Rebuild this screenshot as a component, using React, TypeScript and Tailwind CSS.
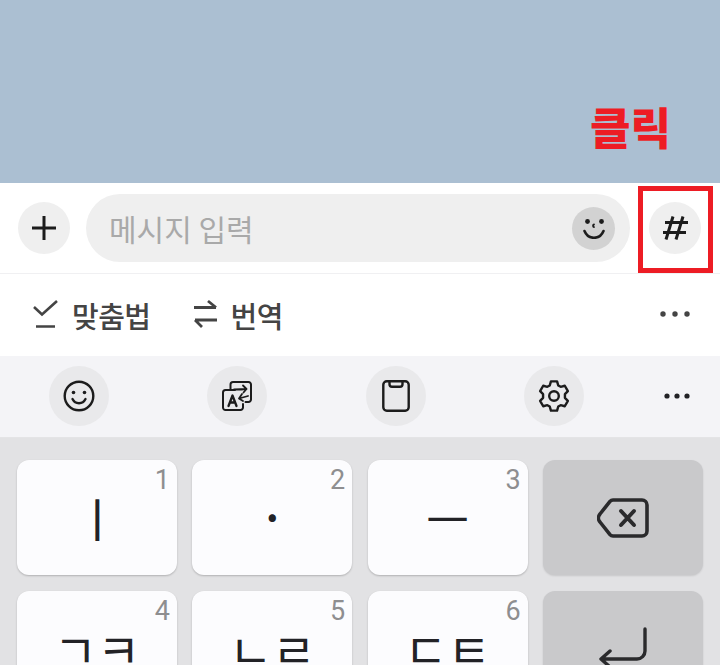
const font = { fontFamily: '"Noto Sans CJK KR", "Noto Sans", sans-serif' };

const CircleButton = ({ children }: { children: React.ReactNode }) => (
  <div className="flex h-[60px] w-[60px] items-center justify-center rounded-full bg-[#e9e9eb]">{children}</div>
);

const Key = ({ label, num, size, weight }: { label: string; num: string; size: string; weight?: string }) => (
  <div className="relative flex h-[115px] items-center justify-center rounded-[12px] bg-[#fcfcfe] pb-[3px] shadow-[0_1px_2px_rgba(0,0,0,0.22)]">
    <span className="absolute right-[7px] top-[2px] text-[27px] leading-[36px] text-[#8e8e90]" style={{ fontFamily: "Roboto, sans-serif" }}>
      {num}
    </span>
    <span className={`${size} ${weight ?? "font-normal"} leading-none text-[#222226]`}>{label}</span>
  </div>
);

const ActionKey = ({ children }: { children: React.ReactNode }) => (
  <div className="flex h-[115px] items-center justify-center rounded-[12px] bg-[#c9c9cb] shadow-[0_1px_2px_rgba(0,0,0,0.12)]">{children}</div>
);

export default function App() {
  return (
    <div className="relative h-[665px] w-[720px] overflow-hidden bg-white" style={font}>
      <div className="h-[183px] bg-[#abbfd2]" />

      {/* input row */}
      <div className="flex h-[91px] items-start border-b border-[#f0f0f2] bg-white pl-[18px] pr-[19px] pt-[11px]">
        <div className="mt-[8px] flex h-[52px] w-[52px] shrink-0 items-center justify-center rounded-full bg-[#efefef]">
          <svg width="26" height="26" viewBox="0 0 26 26" stroke="#1c1c1c" strokeWidth="3">
            <path d="M13 1v24M1 13h24" />
          </svg>
        </div>
        <div className="ml-[16px] flex h-[68px] w-[544px] shrink-0 items-center justify-between rounded-full bg-[#efefef] pl-[23px] pr-[15px]">
          <span className="text-[30px] leading-none text-[#a9a9a9]">메시지 입력</span>
          <div className="flex h-[43px] w-[43px] items-center justify-center rounded-full bg-[#d2d2d2]">
            <svg width="22" height="22" viewBox="0 0 22 22" fill="none" stroke="#1c1c1c" strokeWidth="2.600" strokeLinecap="round">
              <circle cx="4.500" cy="4.500" r="2.400" fill="#1c1c1c" stroke="none" />
              <circle cx="18.500" cy="4.500" r="2.400" fill="#1c1c1c" stroke="none" />
              <path d="M11 7.500c-1.300.3-1.300 2.300 0 2.600" strokeWidth="1.800" />
              <path d="M1.500 14c2 5 5.500 6.800 9.500 6.800s7.500-1.800 9.500-6.800" />
            </svg>
          </div>
        </div>
        <div className="ml-[19px] mt-[8px] flex h-[52px] w-[52px] shrink-0 items-center justify-center rounded-full bg-[#efefef]">
          <svg width="25" height="24" viewBox="0 0 25 24" fill="none" stroke="#1c1c1c" strokeWidth="3">
            <path d="M10 .5 3 23.500M20 .5l-7 23M2 6.500h23M0 16.500h23" />
          </svg>
        </div>
      </div>

      {/* suggestion row */}
      <div className="flex h-[82px] items-center bg-white pl-[33px] pr-[30px] text-[#444444]">
        <svg width="25" height="28" viewBox="0 0 25 28" fill="none" stroke="#444444" strokeWidth="2.600" className="-mt-[2px]">
          <path d="m1 7 8 7.500L24 1M3 26.500h19" />
        </svg>
        <span className="ml-[14px] text-[29px] font-medium leading-none tracking-[-0.5px]">맞춤법</span>
        <svg width="26" height="30" viewBox="0 0 26 30" fill="none" stroke="#444444" strokeWidth="2.800" className="ml-[41px] -mt-[2px]">
          <path d="M2 8.500h22M16 2l8 6.500M25 21H3M3 21l7 7" />
        </svg>
        <span className="ml-[13px] text-[29px] font-medium leading-none tracking-[-0.5px]">번역</span>
        <svg width="30" height="8" viewBox="0 0 30 8" fill="#444444" className="ml-auto -mt-[2px]">
          <circle cx="3" cy="4" r="2.700" />
          <circle cx="15" cy="4" r="2.700" />
          <circle cx="27" cy="4" r="2.700" />
        </svg>
      </div>

      {/* toolbar */}
      <div className="flex h-[82px] items-start border-b border-[#e4e4e6] bg-[#f4f4f7] pl-[49px] pr-[30px] pt-[10px]">
        <CircleButton>
          <svg width="32" height="32" viewBox="0 0 32 32" fill="none" stroke="#1c1c1c" strokeWidth="2.400" strokeLinecap="round">
            <circle cx="16" cy="16" r="14.300" />
            <circle cx="10.500" cy="12.500" r="1.800" fill="#1c1c1c" stroke="none" />
            <circle cx="21.500" cy="12.500" r="1.800" fill="#1c1c1c" stroke="none" />
            <path d="M9.500 19c1.500 3 4 4.200 6.500 4.200s5-1.200 6.500-4.200" />
          </svg>
        </CircleButton>
        <div className="ml-[98px]">
          <CircleButton>
            <svg width="30" height="30" viewBox="0 0 30 30" fill="none" stroke="#1c1c1c" strokeWidth="2" strokeLinecap="round" strokeLinejoin="round">
              <path d="M8.500 8.500V3.500a2.500 2.500 0 0 1 2.500-2.500h15.500a2.500 2.500 0 0 1 2.500 2.500v15a2.500 2.500 0 0 1-2.500 2.500h-3" />
              <path d="M13 9H3.500A2.500 2.500 0 0 0 1 11.500v15A2.500 2.500 0 0 0 3.500 29h15a2.500 2.500 0 0 0 2.500-2.500V23" />
              <path d="M12 8.500c4 0 8 0 12.500-.5M21 4.500l3.500 3.500-3 3.500M26 15l-9 2.500M20 13l-3 4.500 4 2.500" strokeWidth="1.800" />
              <path d="M6.500 25l4-10.500 4 10.500M8 21.500h5" strokeWidth="2.300" />
            </svg>
          </CircleButton>
        </div>
        <div className="ml-[99px]">
          <CircleButton>
            <svg width="28" height="32" viewBox="0 0 28 32" fill="none" stroke="#1c1c1c" strokeWidth="2.400" strokeLinejoin="round">
              <rect x="1.300" y="1.300" width="25.400" height="29.400" rx="3.500" />
              <path d="M7.500 1.500v2.800a2.500 2.500 0 0 0 2.500 2.500h8a2.500 2.500 0 0 0 2.500-2.500V1.500" />
            </svg>
          </CircleButton>
        </div>
        <div className="ml-[98px]">
          <CircleButton>
            <svg width="32" height="32" viewBox="0 0 24 24" fill="none" stroke="#1c1c1c" strokeWidth="1.800" strokeLinejoin="round">
              <path d="M9.700 1h4.600l.9 3.100 1.800 1 3.100-.8 2.300 4-2.200 2.300v2.800l2.200 2.300-2.300 4-3.100-.8-1.800 1-.9 3.100H9.700l-.9-3.100-1.800-1-3.100.8-2.300-4 2.200-2.300v-2.800L1.600 8.300l2.300-4 3.100.8 1.800-1z" />
              <circle cx="12" cy="12" r="3.600" />
            </svg>
          </CircleButton>
        </div>
        <svg width="26" height="8" viewBox="0 0 26 8" fill="#222226" className="ml-auto mt-[26px]">
          <circle cx="3" cy="4" r="2.600" />
          <circle cx="13" cy="4" r="2.600" />
          <circle cx="23" cy="4" r="2.600" />
        </svg>
      </div>

      {/* keyboard */}
      <div className="grid h-[300px] grid-cols-[repeat(4,160px)] content-start gap-x-[15.3px] gap-y-[16px] bg-[#e2e2e4] pl-[17px] pt-[22px]">
        <Key label="ㅣ" num="1" size="text-[47px]" />
        <Key label="·" num="2" size="text-[40px]" weight="font-bold" />
        <Key label="ㅡ" num="3" size="text-[47px]" />
        <ActionKey>
          <svg width="52" height="40" viewBox="0 0 52 40" fill="none" stroke="#2a2a2c" strokeWidth="3.600" strokeLinejoin="round" strokeLinecap="round">
            <path d="M16 2h29a5 5 0 0 1 5 5v26a5 5 0 0 1-5 5H16a4 4 0 0 1-3-1.400L3 24a6 6 0 0 1 0-8L13 3.400A4 4 0 0 1 16 2z" />
            <path d="m24 13 13 14M37 13 24 27" strokeWidth="4" />
          </svg>
        </ActionKey>
        <Key label="ㄱㅋ" num="4" size="text-[47px]" />
        <Key label="ㄴㄹ" num="5" size="text-[47px]" />
        <Key label="ㄷㅌ" num="6" size="text-[47px]" />
        <ActionKey>
          <svg width="50" height="44" viewBox="0 0 50 44" fill="none" stroke="#2a2a2c" strokeWidth="3.400" strokeLinecap="round" strokeLinejoin="round">
            <path d="M47 2v22a8 8 0 0 1-8 8H4M12 24l-9 8 9 8" />
          </svg>
        </ActionKey>
      </div>

      {/* annotation */}
      <span className="absolute left-[590px] top-[99px] text-[44px] font-black leading-[54px] text-[#ed1c24]">클릭</span>
      <div className="absolute left-[638px] top-[186px] h-[87px] w-[75px] border-[5px] border-[#ed1c24]" />
    </div>
  );
}
